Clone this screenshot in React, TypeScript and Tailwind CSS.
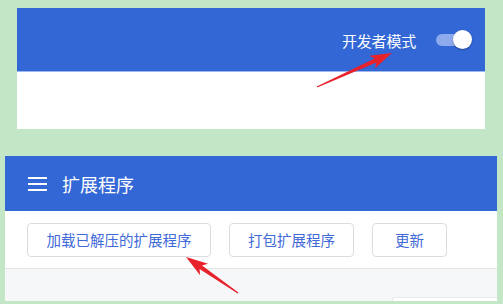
import React from 'react';

const cjk = { fontFamily: '"Noto Sans CJK SC", "Noto Sans", sans-serif' };

const Arrow = ({ x1, y1, x2, y2 }: { x1: number; y1: number; x2: number; y2: number }) => {
  // tail (x1,y1) -> tip (x2,y2)
  const dx = x2 - x1;
  const dy = y2 - y1;
  const len = Math.hypot(dx, dy);
  const ux = dx / len;
  const uy = dy / len;
  const px = -uy;
  const py = ux;
  const head = 22;
  const bx = x2 - ux * head;
  const by = y2 - uy * head;
  const pts = [
    [x1 + px * 0.6, y1 + py * 0.6],
    [bx + ux * 4 + px * 2.2, by + uy * 4 + py * 2.2],
    [bx + px * 7, by + py * 7],
    [x2, y2],
    [bx - px * 7, by - py * 7],
    [bx + ux * 4 - px * 2.2, by + uy * 4 - py * 2.2],
    [x1 - px * 0.6, y1 - py * 0.6],
  ]
    .map((p) => p.join(','))
    .join(' ');
  return <polygon points={pts} fill="#e8222a" />;
};

const App = () => {
  const buttons = [
    { label: '加载已解压的扩展程序', w: 'w-[184px]' },
    { label: '打包扩展程序', w: 'w-[125px]' },
    { label: '更新', w: 'w-[75px]' },
  ];

  return (
    <div className="relative w-[503px] h-[304px] bg-[#c2e6c6] flex flex-col overflow-hidden" style={cjk}>
      {/* developer mode panel */}
      <div className="ml-[17px] mt-[8px] w-[468px] h-[121px] bg-white flex flex-col">
        <div className="h-[63px] bg-[#3367d6] flex items-center justify-end pr-[13px] pt-[1px]">
          <span className="text-[15px] text-white leading-none tracking-[-0.2px]">开发者模式</span>
          <div className="relative ml-[20px] w-[36px] h-[20px] flex items-center">
            <div className="w-[28px] h-[12px] rounded-full bg-[#8eaaec]" />
            <div className="absolute right-0 top-0 w-[19px] h-[19px] rounded-full bg-white shadow-[0_1px_2px_rgba(0,0,0,0.3)]" />
          </div>
        </div>
        <div className="h-[1px] bg-[#9db7ef]" />
      </div>

      {/* extensions panel */}
      <div className="ml-[5px] mt-[27px] w-[492px] h-[145px] bg-white flex flex-col">
        <div className="h-[55px] bg-[#3367d6] flex items-center pl-[23px]">
          <div className="flex flex-col gap-[4px] w-[19px]">
            <div className="h-[2px] bg-white" />
            <div className="h-[2px] bg-white" />
            <div className="h-[2px] bg-white" />
          </div>
          <span className="ml-[15px] text-[18px] text-white leading-none">扩展程序</span>
        </div>
        <div className="h-[58px] flex items-start pt-[12px] pl-[22px] gap-[18px] border-b border-[#e3e4e6]">
          {buttons.map((b) => (
            <div
              key={b.label}
              className={`${b.w} h-[34px] rounded-[4px] border border-[#dadce0] flex items-center justify-center text-[14.5px] text-[#3f6ad8] leading-none`}
            >
              {b.label}
            </div>
          ))}
        </div>
        <div className="flex-1 bg-[#f6f7f9] relative">
          <div className="absolute left-[387px] top-[28px] right-0 h-[4px] border-t border-l border-[#e8e9eb] rounded-tl-[3px] bg-white" />
        </div>
      </div>

      <svg className="absolute inset-0 pointer-events-none" width="503" height="304">
        <Arrow x1={317} y1={87} x2={392} y2={53} />
        <Arrow x1={238} y1={293} x2={186} y2={257} />
      </svg>
    </div>
  );
};

export default App;
